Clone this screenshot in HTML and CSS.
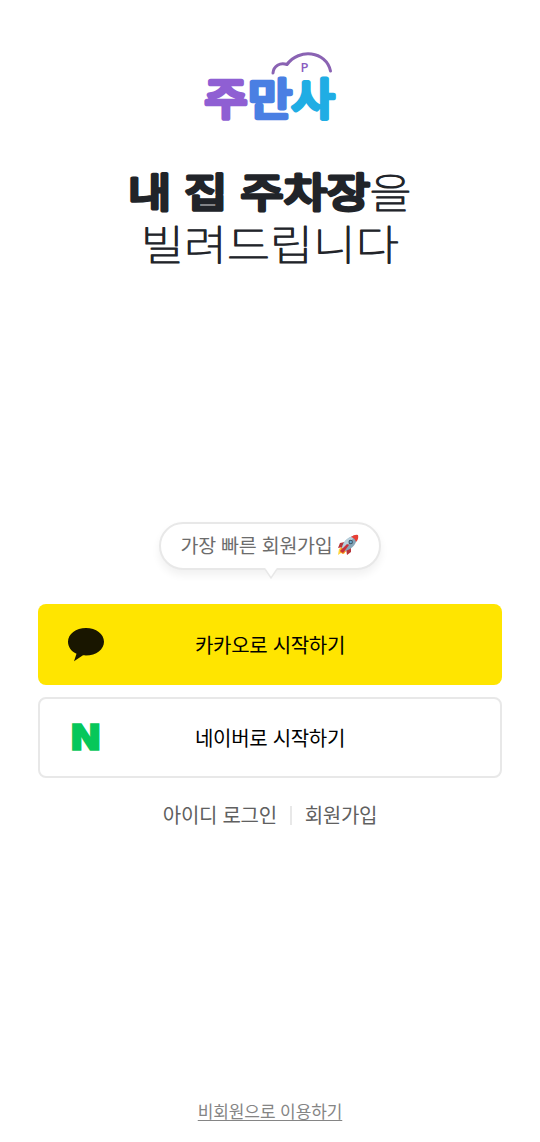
FILE: index.html
```html
<!DOCTYPE html>
<html lang="ko">
<head>
<meta charset="utf-8">
<title>주만사</title>
<link rel="stylesheet" href="styles.css">
</head>
<body>
<main class="page">
  <header class="brand">
    <svg class="logo" viewBox="0 0 140 80" role="img" aria-label="주만사">
      <path class="logo-cloud" d="M73 25C73.500 18 80 14 87 16.500C99 0 126 3 130.500 23"/>
      <text class="logo-p" x="100.500" y="24">P</text>
      <text class="logo-text purple" x="4.500" y="67" textLength="43" lengthAdjust="spacingAndGlyphs">주</text>
      <text class="logo-text blue" x="48" y="67" textLength="44" lengthAdjust="spacingAndGlyphs">만</text>
      <text class="logo-text cyan" x="91.500" y="67" textLength="43" lengthAdjust="spacingAndGlyphs">사</text>
    </svg>
  </header>
  <h1 class="headline">
    <svg viewBox="0 0 300 104">
      <text class="bold" x="8" y="41" textLength="242" lengthAdjust="spacingAndGlyphs">내 집 주차장</text>
      <text class="thin" x="249.500" y="42" textLength="42" lengthAdjust="spacingAndGlyphs">을</text>
      <text class="thin" x="21" y="94" textLength="258" lengthAdjust="spacingAndGlyphs">빌려드립니다</text>
    </svg>
  </h1>
  <section class="login">
    <div class="bubble">
      <span>가장 빠른 회원가입</span>
      <svg class="rocket" viewBox="0 0 22 22">
        <path fill="#ffd43b" d="M1 21L2 15L5 13L9 17L7 20L4 19Z"/>
        <path fill="#f58b29" d="M3 18L4 13L9 17L6 20Z"/>
        <path fill="#b7353b" d="M8 8L3 9L1 14L6 13ZM14 13L14 18L10 21L9 15Z"/>
        <path fill="#86a5b7" d="M5 14C6 7 12 2 20 1C21 8 16 15 8 17Z"/>
        <path fill="#b9d0dc" d="M5 14C6 7 12 2 18 2L8 14Z"/>
        <path fill="#e83f35" d="M14 3Q18 0 21 1Q22 5 19 8Q18 4 14 3Z"/>
        <path fill="#c9303a" d="M3 17L10 10L12 11L6 19Z"/>
        <circle cx="13.7" cy="8" r="2.2" fill="#3c5364"/>
        <circle cx="13.7" cy="8" r="1.2" fill="#68a9cf"/>
      </svg>
      <svg class="tail" viewBox="0 0 12 11"><path class="tail-fill" d="M0 0L6 10L12 0Z"/><path class="tail-edge" d="M0 1L6 10L12 1"/></svg>
    </div>
    <button class="button kakao">
      <svg class="talk" viewBox="0 0 36 34"><path d="M18 0C8 0 0 6 0 13.700C0 19 3.500 23.500 8.500 25.700L6 33.300L15 27.300C27 28.500 36 22 36 13.700C36 6 28 0 18 0Z"/></svg>
      <span>카카오로 시작하기</span>
    </button>
    <button class="button naver">
      <svg class="naver-mark" viewBox="0 0 28 28"><text x="-1" y="26" textLength="29" lengthAdjust="spacingAndGlyphs">N</text></svg>
      <span>네이버로 시작하기</span>
    </button>
    <nav class="links"><a>아이디 로그인</a><i class="divider"></i><a>회원가입</a></nav>
  </section>
  <footer class="guest"><a>비회원으로 이용하기</a></footer>
</main>
</body>
</html>
```
FILE: styles.css
```css
* { box-sizing: border-box; }
body { margin: 0; background: #fff; font-family: "Noto Sans CJK KR", sans-serif; }
.page { height: 1142px; padding: 48px 38px 0; display: flex; flex-direction: column; align-items: center; }
.brand { height: 80px; }
.logo { display: block; width: 140px; height: 80px; overflow: visible; }
.logo-cloud { fill: none; stroke: #8a63b3; stroke-width: 3; stroke-linecap: round; stroke-linejoin: round; }
.logo-p { font: 600 13px "Open Sans", sans-serif; fill: #8a5cc0; }
.logo-text { font-size: 43px; font-weight: 400; stroke-width: 4.6; stroke-linejoin: round; }
.purple { fill: #8f5fd3; stroke: #8f5fd3; }
.blue { fill: #4a7fe3; stroke: #4a7fe3; }
.cyan { fill: #20ade4; stroke: #20ade4; }
.headline { margin: 38px 0 0; width: 300px; height: 104px; }
.headline svg { display: block; width: 300px; height: 104px; overflow: visible; }
.headline text { fill: #212429; stroke: #212429; stroke-linejoin: round; }
.headline .bold { font-size: 40px; font-weight: 400; stroke-width: 3.6px; }
.headline .thin { font-size: 41px; font-weight: 100; stroke-width: 1.2px; }
.login { width: 100%; margin-top: 252px; display: flex; flex-direction: column; align-items: center; }
.bubble { position: relative; width: 222px; height: 48px; border: 2px solid #e8e8e8; border-radius: 24px; background: #fff; box-shadow: 0 5px 8px rgba(0,0,0,.06); display: flex; align-items: center; justify-content: center; gap: 5px; padding-bottom: 2px; font-size: 19.5px; letter-spacing: -.25px; line-height: 28px; color: #6c6c6c; white-space: nowrap; }
.rocket { width: 22px; height: 22px; }
.tail { position: absolute; left: 104px; top: 44px; width: 12px; height: 11px; overflow: visible; }
.tail-fill { fill: #fff; }
.tail-edge { fill: none; stroke: #e8e8e8; stroke-width: 1.5; }
.button { position: relative; width: 464px; height: 81px; padding: 0; border: 0; border-radius: 8px; display: flex; align-items: center; justify-content: center; font: 400 20px/30px "Noto Sans CJK KR", sans-serif; letter-spacing: -.3px; color: #000; }
.kakao { margin-top: 34px; background: #ffe500; }
.naver { margin-top: 12px; background: #fff; border: 2px solid #e8e8e8; }
.talk { position: absolute; left: 30px; top: 24px; width: 36px; height: 34px; fill: #191600; }
.naver-mark { position: absolute; left: 32px; top: 25px; width: 28px; height: 28px; overflow: visible; }
.naver-mark text { font: 900 35px Inter, sans-serif; fill: #06c75a; stroke: #06c75a; stroke-width: 1.4; }
.links { margin-top: 22px; display: flex; align-items: center; gap: 13px; font-size: 20px; letter-spacing: -.3px; line-height: 30px; color: #606060; }
.divider { width: 2px; height: 19px; background: #e8e8e8; }
.guest { margin-top: 268px; font-size: 17px; letter-spacing: -.1px; line-height: 25px; color: #858585; }
.guest a { text-decoration: underline; text-underline-offset: 2px; text-decoration-thickness: 1px; }
```
